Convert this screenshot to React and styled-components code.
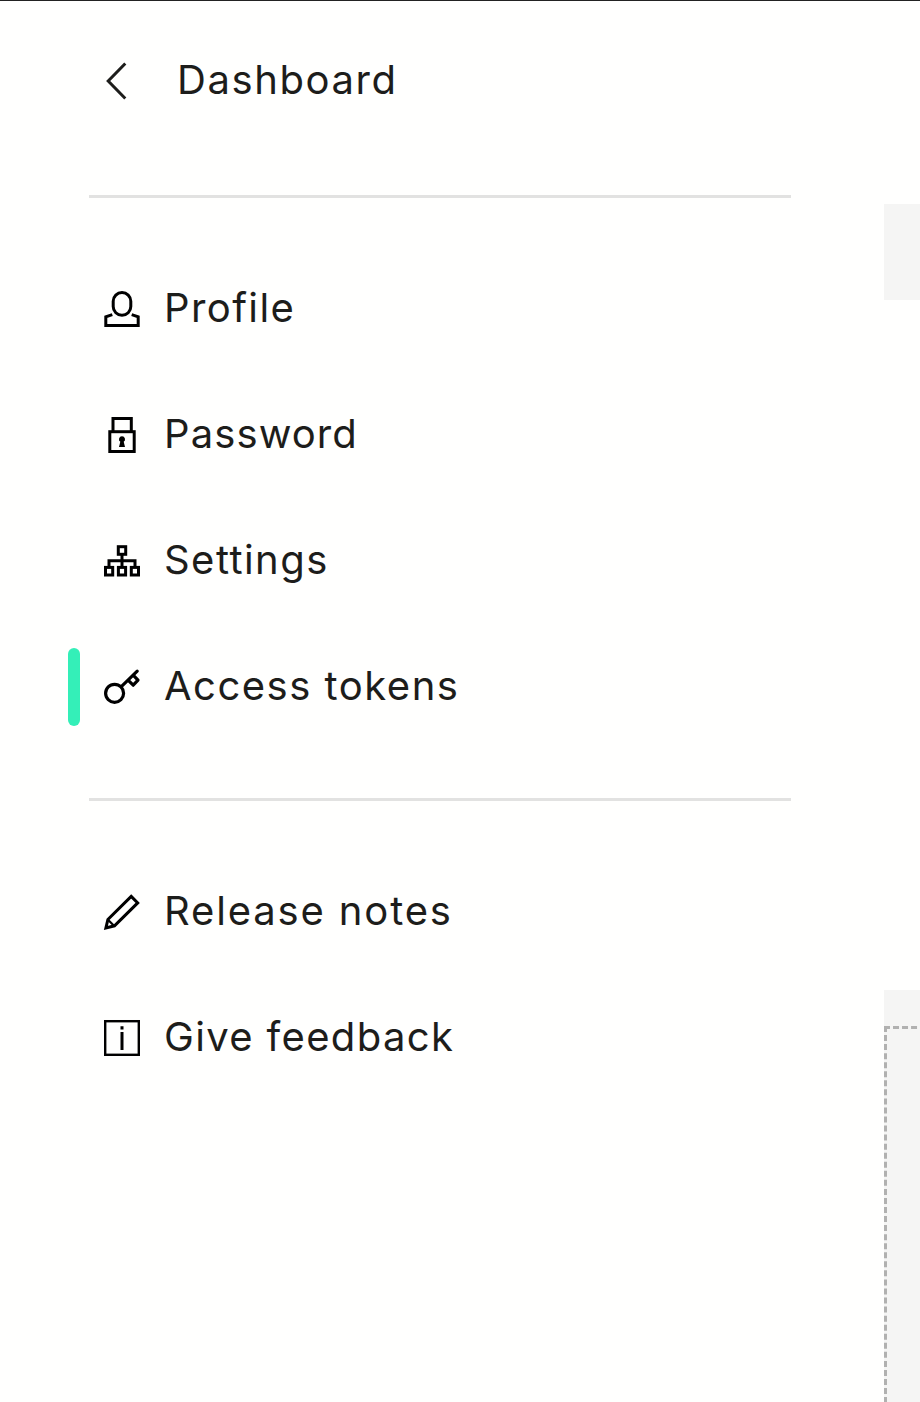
import React from "react";
import styled, { createGlobalStyle } from "styled-components";

const GlobalStyle = createGlobalStyle`
  * { box-sizing: border-box; }
  body { margin: 0; background: #fffffe; }
`;

const Page = styled.div`
  display: flex;
  height: 1402px;
  overflow: hidden;
  border-top: 1px solid #222222;
  background: #fffffe;
  color: #1d1d1b;
  font-family: Inter, "Open Sans", sans-serif;
`;

const Sidebar = styled.nav`
  flex: 0 0 884px;
  padding: 40px 93px 0 68px;
`;

const Row = styled.a`
  display: flex;
  align-items: center;
  height: 78px;
  color: inherit;
  text-decoration: none;
`;

const BackLink = styled(Row)`
  padding-left: 36px;
  gap: 37px;
`;

const Marker = styled.span`
  width: 12px;
  height: 78px;
  margin-right: 24px;
  border-radius: 6px;
  background: ${(p) => (p.$active ? "#34efb8" : "transparent")};
`;

const Label = styled.span`
  font-size: 40px;
  line-height: 54px;
  padding-bottom: ${(p) => (p.$heading ? 0 : 2)}px;
  white-space: nowrap;
  letter-spacing: ${(p) => p.$tracking}px;
`;

const Icon = styled.svg.attrs({ viewBox: "0 0 36 36", width: 36, height: 36 })`
  flex: none;
  margin-right: ${(p) => (p.$back ? 0 : 24)}px;
  overflow: visible;
  fill: none;
  stroke: ${(p) => (p.$back ? "#1d1d1b" : "#000")};
  stroke-width: 3;
`;

const Divider = styled.hr`
  height: 3px;
  margin: 0 0 0 21px;
  border: 0;
  background: #e2e2e1;
`;

const Group = styled.div`
  display: flex;
  flex-direction: column;
  gap: 48px;
  padding: 72px 0;
`;

const Content = styled.main`
  flex: 1;
  min-width: 0;
  overflow: hidden;
  padding-top: 203px;
`;

const Band = styled.div`
  height: 96px;
  background: #f5f5f4;
`;

const Panel = styled.div`
  width: 1800px;
  height: 600px;
  margin-top: 690px;
  padding-top: 36px;
  background: #f5f5f4;
`;

const DropArea = styled.div`
  height: 540px;
  border: 3px dashed #b1b1b0;
`;

const ICONS = {
  profile: (
    <>
      <rect x="9.2" y="1.5" width="17.6" height="22.8" rx="8.8" />
      <path d="M8.3 23.6 L1.8 25.8 V34.4 H34.2 V25.8 L27.7 23.6" />
    </>
  ),
  password: (
    <>
      <path d="M9 15V1.5H27.3V15" />
      <rect x="5.8" y="14.7" width="24.4" height="19.8" />
      <path d="M18 19.3a3 3 0 0 1 1.7 5.5L21 30H15L16.3 24.8A3 3 0 0 1 18 19.3Z" fill="#000" stroke="none" />
    </>
  ),
  settings: (
    <>
      <rect x="14.3" y="3.7" width="7.4" height="7.6" />
      <path d="M18 11.3V23M5 23V17.8H31V23" />
      <rect x="1.5" y="24.4" width="7.2" height="7.6" />
      <rect x="14.4" y="24.4" width="7.2" height="7.6" />
      <rect x="27.3" y="24.4" width="7.2" height="7.6" />
    </>
  ),
  tokens: (
    <>
      <circle cx="10.6" cy="24.3" r="9" strokeWidth="3.2" />
      <path d="M17.3 17.7L33.2 2.2M24.3 11.3L29.2 16.2L34 11.2L29.4 6.4" strokeWidth="3.2" strokeLinejoin="round" strokeLinecap="round" />
    </>
  ),
  notes: (
    <>
      <path d="M27.2 2.4L33.7 8.9L10.5 31.8L1.9 34L3.9 25.5Z" strokeWidth="3" />
      <path d="M4 25.8L10.2 32" strokeWidth="2.2" />
    </>
  ),
  feedback: (
    <>
      <rect x="1.2" y="1.2" width="33.6" height="33.6" strokeWidth="2.4" />
      <path d="M18 6.3V9.5M18 12V30" />
    </>
  ),
};

const ACCOUNT = [
  { icon: "profile", text: "Profile", tracking: 1.4 },
  { icon: "password", text: "Password", tracking: 1.1 },
  { icon: "settings", text: "Settings", tracking: 1.45 },
  { icon: "tokens", text: "Access tokens", tracking: 1.5, active: true },
];

const MORE = [
  { icon: "notes", text: "Release notes", tracking: 1.85 },
  { icon: "feedback", text: "Give feedback", tracking: 1.35 },
];

function MenuGroup({ items }) {
  return (
    <Group>
      {items.map((item) => (
        <Row key={item.text}>
          <Marker $active={item.active} />
          <Icon>{ICONS[item.icon]}</Icon>
          <Label $tracking={item.tracking}>{item.text}</Label>
        </Row>
      ))}
    </Group>
  );
}

const Header = styled.header`
  height: 154px;
`;

export default function App() {
  return (
    <Page>
      <GlobalStyle />
      <Sidebar>
        <Header>
          <BackLink>
            <Icon $back>
              <path d="M21.3 1.5L4.2 19L21.3 36.5" />
            </Icon>
            <Label $heading $tracking={1.6}>Dashboard</Label>
          </BackLink>
        </Header>
        <Divider />
        <MenuGroup items={ACCOUNT} />
        <Divider />
        <MenuGroup items={MORE} />
      </Sidebar>
      <Content>
        <Band />
        <Panel>
          <DropArea />
        </Panel>
      </Content>
    </Page>
  );
}
